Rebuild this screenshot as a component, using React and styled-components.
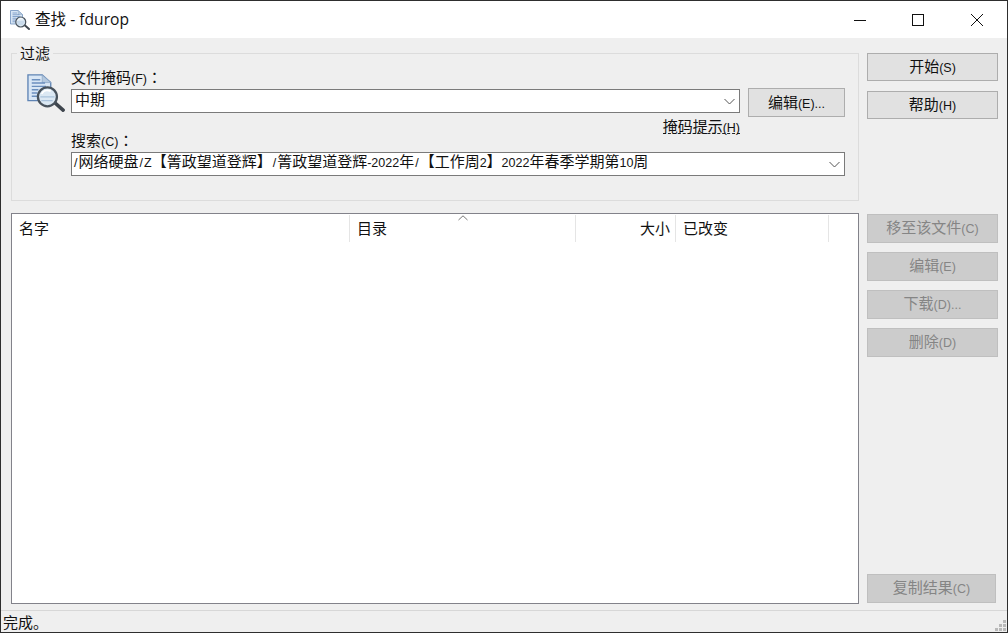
import React from "react";
import styled, { createGlobalStyle } from "styled-components";

const GlobalStyle = createGlobalStyle`
  html, body {
    margin: 0;
    padding: 0;
    background: #efefef;
  }
  * {
    box-sizing: border-box;
  }
`;

const Window = styled.div`
  width: 1008px;
  height: 633px;
  display: flex;
  flex-direction: column;
  border: 1px solid #2e2e2e;
  background: #efefef;
  color: #111;
  font-family: "Noto Sans CJK SC", sans-serif;
  font-size: 15px;
  overflow: hidden;
`;

// latin bits sit smaller than the chinese next to them
const Latin = styled.span`
  font-family: "Liberation Sans", sans-serif;
  font-size: 12.5px;
`;

const Slash = styled(Latin)`
  padding: 0 1px;
`;

const TitleBar = styled.div`
  height: 37px;
  flex: none;
  display: flex;
  align-items: center;
  padding-left: 9px;
  background: #fff;
`;

const TitleText = styled.span`
  margin: -2px 0 0 5px;
  font-family: "Open Sans", "Noto Sans CJK SC", sans-serif;
  font-size: 15.6px;
  flex: 1;
`;

const WinControls = styled.div`
  display: flex;
  margin-right: 1px;
`;

const WinButton = styled.div`
  width: 58.5px;
  height: 37px;
  display: flex;
  align-items: center;
  justify-content: center;
`;

const Main = styled.div`
  flex: 1;
  min-height: 0;
  display: flex;
  flex-direction: column;
  padding: 15px 9px 0 10px;
`;

const TopRow = styled.div`
  display: flex;
  gap: 8px;
  height: 160px;
  flex: none;
`;

const BottomRow = styled.div`
  display: flex;
  gap: 8px;
  flex: 1;
  min-height: 0;
  padding-bottom: 6px;
`;

const FilterGroup = styled.fieldset`
  width: 848px;
  height: 148px;
  margin: 0;
  padding: 0 13px 0 15px;
  border: 1px solid #dcdcdc;
  display: flex;
  gap: 6px;
  position: relative;
`;

const GroupTitle = styled.legend`
  position: absolute;
  top: -10px;
  left: 5px;
  padding: 0 3px;
  background: #efefef;
  line-height: 18px;
`;

const IconSlot = styled.div`
  width: 38px;
  padding-top: 20px;
  flex: none;
`;

const FilterFields = styled.div`
  flex: 1;
  min-width: 0;
  display: flex;
  flex-direction: column;
  padding-top: 14px;
`;

const FieldLabel = styled.label`
  height: ${(p) => p.$height}px;
  line-height: 18px;
`;

const Colon = styled.span`
  font-family: "Noto Sans CJK TC", sans-serif;
`;

const MaskRow = styled.div`
  display: flex;
  align-items: flex-start;
  gap: 8px;
  height: 28px;
`;

const Combo = styled.div`
  flex: ${(p) => (p.$grow ? 1 : "none")};
  height: 24px;
  margin-top: ${(p) => (p.$grow ? "1px" : "0")};
  display: flex;
  align-items: center;
  justify-content: space-between;
  padding: 0 4px 0 ${(p) => (p.$grow ? "3px" : "1px")};
  background: #fff;
  border: 1px solid #7a7a7a;
  white-space: nowrap;
`;

const ComboText = styled.span`
  margin-top: ${(p) => p.$lift}px;
  line-height: 16px;
`;

const HintRow = styled.div`
  height: 15px;
  display: flex;
  justify-content: flex-end;
  padding-right: 105px;
`;

const HintLink = styled.span`
  line-height: 20px;
  height: 18px;
  border-bottom: 1px dashed #222;
`;

const Button = styled.div`
  width: ${(p) => p.$width || 131}px;
  height: ${(p) => p.$height || 29}px;
  flex: none;
  display: flex;
  align-items: center;
  justify-content: center;
  padding-bottom: ${(p) => p.$lift ?? 4}px;
  background: ${(p) => (p.disabled ? "#cccccc" : "#e1e1e1")};
  border: 1px solid ${(p) => (p.disabled ? "#bfbfbf" : "#adadad")};
  color: ${(p) => (p.disabled ? "#858585" : "#111")};
  white-space: nowrap;
`;

const SideColumn = styled.div`
  display: flex;
  flex-direction: column;
  gap: ${(p) => p.$gap}px;
  flex: none;
  width: 131px;
`;

const ActionColumn = styled(SideColumn)`
  padding: 1px 0;
`;

const Spacer = styled.div`
  flex: 1;
`;

const ResultList = styled.div`
  width: 848px;
  border: 1px solid #82828a;
  background: #fff;
  position: relative;
`;

const ListHeader = styled.div`
  height: 28px;
  display: grid;
  grid-template-columns: 338px 226px 100px 153px;
  padding-top: 1px;
`;

const HeaderCell = styled.div`
  display: flex;
  align-items: center;
  justify-content: ${(p) => (p.$right ? "flex-end" : "flex-start")};
  padding: 0 5px 2px 7px;
  border-right: 1px solid #e5e5e5;
`;

const SortArrow = styled.svg`
  position: absolute;
  top: 1px;
  left: 446px;
`;

const StatusBar = styled.div`
  height: 22px;
  flex: none;
  margin: 0 -9px 0 -10px;
  border-top: 1px solid #d7d7d7;
  display: flex;
  justify-content: space-between;
  align-items: flex-end;
  padding-left: 2px;
  line-height: 20px;
`;

const Chevron = () => (
  <svg width="11" height="7" viewBox="0 0 11 7" fill="none" stroke="#555" strokeWidth="1">
    <path d="M.5 1 5.5 6 10.5 1" />
  </svg>
);

// sheet of paper with a magnifier on top, used big and small
const FindIcon = ({ size }) => (
  <svg width={size} height={size} viewBox="0 0 40 40">
    <path d="M1 1H16L25 9V28H1Z" fill="#d8e6f5" stroke="#5f84b4" strokeWidth="1.4" />
    <path d="M16 1V9H25Z" fill="#b4c8de" stroke="#8ca6c6" strokeWidth=".8" />
    <path
      d="M5 6H14M5 9.5H19M5 13H20M5 16.5H12M5 20H11M5 23.5H11"
      stroke="#6b8fbe"
      strokeWidth="1.5"
    />
    <path d="M29 30 38 38" stroke="#3f464e" strokeWidth="3.8" strokeLinecap="round" />
    <circle cx="21.5" cy="24" r="10" fill="#dbe8f3" stroke="#48525c" strokeWidth="2.4" />
    <path d="M14 24H29M15 28H27" stroke="#a9c2dc" strokeWidth="1.4" />
    <path d="M15.5 21C17 17.500 21 16.500 25 18" fill="none" stroke="#fff" strokeWidth="2" />
  </svg>
);

const MinimizeIcon = () => (
  <svg width="12" height="12" viewBox="0 0 12 12" stroke="#111" strokeWidth="1">
    <path d="M0 6.500H12" />
  </svg>
);

const MaximizeIcon = () => (
  <svg width="12" height="12" viewBox="0 0 12 12" fill="none" stroke="#111" strokeWidth="1">
    <rect x=".5" y=".5" width="11" height="11" />
  </svg>
);

const CloseIcon = () => (
  <svg width="12" height="12" viewBox="0 0 12 12" stroke="#111" strokeWidth="1">
    <path d="M0 0 12 12M12 0 0 12" />
  </svg>
);

const ResizeGrip = () => (
  <svg width="12" height="12" viewBox="0 0 12 12" fill="#b9b9b9">
    <path d="M8 0h3v3H8zM4 4h3v3H4zM8 4h3v3H8zM0 8h3v3H0zM4 8h3v3H4zM8 8h3v3H8z" />
  </svg>
);

export default function App() {
  return (
    <Window>
      <GlobalStyle />
      <TitleBar>
        <FindIcon size={20} />
        <TitleText>查找 - fdurop</TitleText>
        <WinControls>
          <WinButton>
            <MinimizeIcon />
          </WinButton>
          <WinButton>
            <MaximizeIcon />
          </WinButton>
          <WinButton>
            <CloseIcon />
          </WinButton>
        </WinControls>
      </TitleBar>
      <Main>
        <TopRow>
          <FilterGroup>
            <GroupTitle>过滤</GroupTitle>
            <IconSlot>
              <FindIcon size={38} />
            </IconSlot>
            <FilterFields>
              <FieldLabel $height={20}>
                文件掩码<Latin>(F)</Latin>
                <Colon>：</Colon>
              </FieldLabel>
              <MaskRow>
                <Combo $grow>
                  <ComboText $lift={-5}>中期</ComboText>
                  <Chevron />
                </Combo>
                <Button $width={97} $lift={2}>
                  <span>
                    编辑<Latin>(E)...</Latin>
                  </span>
                </Button>
              </MaskRow>
              <HintRow>
                <HintLink>
                  掩码提示<Latin>(H)</Latin>
                </HintLink>
              </HintRow>
              <FieldLabel $height={21}>
                搜索<Latin>(C)</Latin>
                <Colon>：</Colon>
              </FieldLabel>
              <Combo>
                <ComboText $lift={-4}>
                  <Slash>/</Slash>网络硬盘<Slash>/</Slash>
                  <Latin>Z</Latin>【箐政望道登辉】<Slash>/</Slash>箐政望道登辉<Latin>-2022</Latin>年
                  <Slash>/</Slash>【工作周<Latin>2</Latin>】<Latin>2022</Latin>年春季学期第
                  <Latin>10</Latin>周
                </ComboText>
                <Chevron />
              </Combo>
            </FilterFields>
          </FilterGroup>
          <SideColumn $gap={10}>
            <Button $height={28}>
              <span>
                开始<Latin>(S)</Latin>
              </span>
            </Button>
            <Button $height={28}>
              <span>
                帮助<Latin>(H)</Latin>
              </span>
            </Button>
          </SideColumn>
        </TopRow>
        <BottomRow>
          <ResultList>
            <ListHeader>
              <HeaderCell>名字</HeaderCell>
              <HeaderCell>目录</HeaderCell>
              <HeaderCell $right>大小</HeaderCell>
              <HeaderCell>已改变</HeaderCell>
            </ListHeader>
            <SortArrow width="10" height="6" viewBox="0 0 10 6" fill="none" stroke="#777">
              <path d="M.5 5 5 .8 9.5 5" />
            </SortArrow>
          </ResultList>
          <ActionColumn $gap={9}>
            <Button disabled>
              <span>
                移至该文件<Latin>(C)</Latin>
              </span>
            </Button>
            <Button disabled>
              <span>
                编辑<Latin>(E)</Latin>
              </span>
            </Button>
            <Button disabled>
              <span>
                下载<Latin>(D)...</Latin>
              </span>
            </Button>
            <Button disabled>
              <span>
                删除<Latin>(D)</Latin>
              </span>
            </Button>
            <Spacer />
            <Button disabled $width={129}>
              <span>
                复制结果<Latin>(C)</Latin>
              </span>
            </Button>
          </ActionColumn>
        </BottomRow>
        <StatusBar>
          完成。
          <ResizeGrip />
        </StatusBar>
      </Main>
    </Window>
  );
}
